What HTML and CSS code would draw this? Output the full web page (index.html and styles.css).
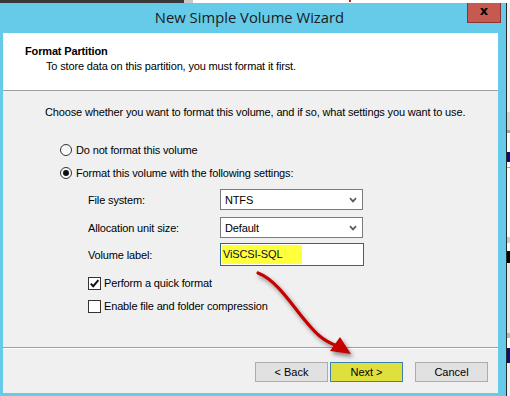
FILE: index.html
```html
<!DOCTYPE html>
<html>
<head>
    <meta charset="utf-8">
    <title>New Simple Volume Wizard</title>
<link rel="stylesheet" href="styles.css">
</head>
<body>
    <div class="screen">

        <div class="behind-top">
            <span class="bt-dark"></span>
            <span class="bt-light"></span>
            <span class="bt-white"><i class="bt-red"></i></span>
        </div>

        <div class="desk">
            <div class="window">

                <div class="titlebar">
                    <span></span>
                    <span class="title">New Simple Volume Wizard</span>
                    <button class="close">x</button>
                </div>

                <div class="client">
                    <div class="header">
                        <div class="h-title">Format Partition</div>
                        <div class="h-sub">To store data on this partition, you must format it first.</div>
                    </div>

                    <div class="content">
                        <p class="intro">Choose whether you want to format this volume, and if so, what settings you want to use.</p>

                        <div class="radio-row"><span class="radio"></span>Do not format this volume</div>
                        <div class="radio-row second"><span class="radio checked"></span>Format this volume with the following settings:</div>

                        <div class="settings">
                            <div class="field">
                                <span class="field-label">File system:</span>
                                <div class="select">NTFS
                                    <svg class="chev" width="8" height="6" viewBox="0 0 8 6"><path d="M1 1.2 L4 4.4 L7 1.2" fill="none" stroke="#5a5a5a" stroke-width="1.7"/></svg>
                                </div>
                            </div>
                            <div class="field">
                                <span class="field-label">Allocation unit size:</span>
                                <div class="select">Default
                                    <svg class="chev" width="8" height="6" viewBox="0 0 8 6"><path d="M1 1.2 L4 4.4 L7 1.2" fill="none" stroke="#5a5a5a" stroke-width="1.7"/></svg>
                                </div>
                            </div>
                            <div class="field">
                                <span class="field-label">Volume label:</span>
                                <div class="textbox"><span class="marked">ViSCSI-SQL</span></div>
                            </div>

                            <div class="check-row first">
                                <span class="check">
                                    <svg width="11" height="11" viewBox="0 0 11 11"><path d="M1.8 5.6 L4.2 8.2 L9.4 2.2" fill="none" stroke="#111" stroke-width="2"/></svg>
                                </span>Perform a quick format
                            </div>
                            <div class="check-row"><span class="check"></span>Enable file and folder compression</div>
                        </div>
                    </div>

                    <div class="footer">
                        <button class="btn">&lt; Back</button>
                        <button class="btn next">Next &gt;</button>
                        <button class="btn cancel">Cancel</button>
                    </div>
                </div>
            </div>
            <div class="behind-side"></div>
        </div>

        <!-- red arrow drawn over the dialog -->
        <svg class="arrow" width="510" height="396" viewBox="0 0 510 396">
            <defs>
                <filter id="shade" x="-20%" y="-20%" width="140%" height="140%">
                    <feDropShadow dx="2" dy="3" stdDeviation="2" flood-color="#000" flood-opacity="0.45"/>
                </filter>
            </defs>
            <g filter="url(#shade)">
                <path d="M258 273 C 276 280, 290 302, 303 318 S 322 340, 337 346" fill="none" stroke="#c40000" stroke-width="3.2" stroke-linecap="round"/>
                <polygon points="340,337 351,354 330,351" fill="#c40000"/>
            </g>
        </svg>
    </div>
</body>
</html>
```

FILE: styles.css
```css
body,html{
    margin: 0;
    padding: 0;
}
body{
    font-family: "Liberation Sans", Arial, sans-serif;
    font-size: 11px;
    letter-spacing: -0.15px;
    color: #000;
}
.screen{
    position: relative;
    width: 510px;
    height: 396px;
    overflow: hidden;
    display: flex;
    flex-direction: column;
    background-color: #fff;
}
.behind-top{
    height: 3px;
    display: flex;
}
.bt-dark{
    width: 184px;
    background-color: #383838;
}
.bt-light{
    width: 9px;
    background-color: #c9c9c9;
}
.bt-white{
    flex: 1;
    background-color: #fff;
    position: relative;
}
.bt-red{
    position: absolute;
    left: 156px;
    top: 0;
    width: 2px;
    height: 2px;
    background-color: #c02020;
}
.desk{
    flex: 1;
    display: flex;
}
.window{
    width: 506px;
    border-right: 1px solid #2b2b2b;
    background-color: #65cbe9;
    display: flex;
    flex-direction: column;
    padding-bottom: 3px;
}
.titlebar{
    height: 30px;
    display: grid;
    grid-template-columns: 1fr auto 1fr;
    padding-right: 7px;
}
.title{
    font-family: "Open Sans", "Noto Sans", sans-serif;
    font-size: 14.8px;
    letter-spacing: 0;
    color: #1b1b1b;
    align-self: center;
    padding-bottom: 2px;
}
.close{
    justify-self: end;
    align-self: start;
    margin-right: -2px;
    width: 34px;
    height: 20px;
    padding: 0 0 3px 0;
    border: 1px solid #8a3434;
    border-top: none;
    background-color: #c75a50;
    font-family: "DejaVu Sans", sans-serif;
    font-weight: bold;
    font-size: 13px;
    line-height: 14px;
    color: #000;
}
.client{
    flex: 1;
    margin: 0 8px 0 3px;
    background-color: #f0f0f0;
    display: flex;
    flex-direction: column;
}
.header{
    background-color: #fff;
    border-bottom: 1px solid #a0a0a0;
    padding: 11px 0 0 22px;
    box-sizing: border-box;
    height: 58px;
}
.h-title{
    font-weight: bold;
    line-height: 14px;
}
.h-sub{
    margin: 1px 0 0 21px;
    line-height: 14px;
}
.content{
    flex: 1;
    padding: 14px 0 0 42px;
}
.intro{
    margin: 0;
    line-height: 14px;
}
.radio-row{
    display: flex;
    align-items: center;
    height: 16px;
    margin: 23px 0 0 15px;
    gap: 4px;
}
.radio-row.second{
    margin-top: 7px;
}
.radio{
    width: 10px;
    height: 10px;
    border: 1px solid #333;
    border-radius: 50%;
    background: linear-gradient(#f4f4f4, #fff);
    display: flex;
    align-items: center;
    justify-content: center;
}
.radio.checked::after{
    content: "";
    width: 6px;
    height: 6px;
    border-radius: 50%;
    background-color: #111;
}
.settings{
    margin: 8px 0 0 43px;
}
.field{
    display: flex;
    align-items: center;
    margin-bottom: 7px;
}
.field:nth-child(2){
    margin-bottom: 5px;
}
.field-label{
    width: 132px;
}
.select{
    width: 143px;
    height: 21px;
    box-sizing: border-box;
    border: 1px solid #7a7a7a;
    background-color: #fff;
    display: flex;
    align-items: center;
    justify-content: space-between;
    padding: 0 5px 0 4px;
    color: #000;
}
.textbox{
    width: 144px;
    height: 23px;
    box-sizing: border-box;
    border: 1px solid #2c6497;
    background-color: #fff;
    padding: 1px;
    display: flex;
}
.marked{
    width: 79px;
    background-color: #ffff3c;
    color: #0a0a30;
    padding-left: 1px;
    line-height: 19px;
}
.check-row{
    display: flex;
    align-items: center;
    height: 16px;
    gap: 3px;
    margin-top: 7px;
}
.check-row.first{
    margin-top: 9px;
}
.check{
    width: 11px;
    height: 11px;
    border: 1px solid #333;
    background-color: #fff;
    display: flex;
}
.footer{
    height: 46px;
    box-sizing: border-box;
    border-top: 1px solid #a0a0a0;
    box-shadow: inset 0 1px 0 #fff;
    padding: 14px 10px 0 0;
    display: flex;
    justify-content: flex-end;
    align-items: flex-start;
}
.btn{
    width: 73px;
    height: 20px;
    margin: 0;
    border: 1px solid #adadad;
    background-color: #e1e1e1;
    font-family: "Liberation Sans", Arial, sans-serif;
    font-size: 11px;
    color: #000;
}
.btn.next{
    margin-left: 2px;
    border-color: #3c7fb1;
    background-color: #dfdf3e;
}
.btn.cancel{
    margin-left: 12px;
}
.behind-side{
    flex: 1;
    background: linear-gradient(#f2f2f2 0, #f2f2f2 109px,
        #d8d8d8 109px, #d8d8d8 127px,
        #a8a8a8 127px, #a8a8a8 130px,
        #fff 130px, #fff 149px,
        #0c0c7c 149px, #0c0c7c 159px,
        #fff 159px, #fff 164px,
        #aaa 164px, #aaa 165px,
        #fff 165px, #fff 234px,
        #cfcfcf 234px, #cfcfcf 240px,
        #fff 240px, #fff 248px,
        #050505 248px, #050505 260px,
        #e8e8e8 260px, #e8e8e8 330px,
        #b9b9b9 330px, #b9b9b9 335px,
        #fff 335px, #fff 345px,
        #0c0c7c 345px, #0c0c7c 360px,
        #f0f0f0 360px);
}
.arrow{
    position: absolute;
    left: 0;
    top: 0;
    pointer-events: none;
}
```
